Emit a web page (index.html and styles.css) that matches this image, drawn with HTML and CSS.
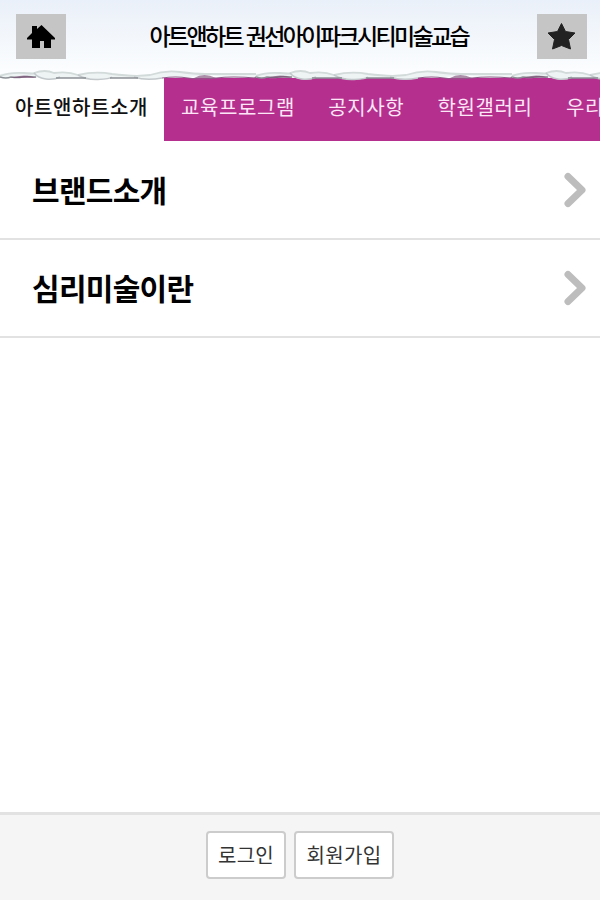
FILE: index.html
```html
<!DOCTYPE html>
<html lang="ko">
<head>
    <meta charset="UTF-8">
    <meta name="viewport" content="width=device-width, initial-scale=1.0">
    <title>아트앤하트</title>
    <link rel="stylesheet" href="styles.css">
</head>
<body>
    <header class="header">
        <a class="icon-btn" href="#" aria-label="홈">
            <svg width="30" height="26" viewBox="0 0 30 26"><path d="M1 14 L6 9 V2 H11 V5 L15.500 1 L29 14 V15.500 H25 V24 H18 V17 H14 V24 H6 V15.500 H1Z" fill="#000"/></svg>
        </a>
        <h1 class="title">아트앤하트 권선아이파크시티미술교습</h1>
        <a class="icon-btn" href="#" aria-label="즐겨찾기">
            <svg width="30" height="30" viewBox="0 0 30 30"><path d="M14.500 1.500 L18.500 9.500 L28 11 L21.500 17.500 L23.500 27 L14.500 23.500 L5.500 27 L7.500 17.500 L1 11 L10.500 9.500Z" fill="#222" stroke="#222" stroke-linejoin="round"/></svg>
        </a>
        <!-- torn paper edge, repeats every 256px -->
        <svg class="torn" width="600" height="14">
            <defs>
                <pattern id="edge" width="256" height="14" patternUnits="userSpaceOnUse">
                    <path d="M0 6 Q20 3 34 5 Q45 1 56 5 Q70 3 80 7 Q95 3 112 6 Q135 9 150 7 Q165 2 180 4 T205 6 T256 6 V9 Q235 10 222 9 Q212 6 200 8 Q180 10 165 9 Q150 14 138 10 L110 10 Q98 13 86 10 H60 Q50 13 40 10 Q27 6 10 10 L0 10Z" fill="#eef3f4"/>
                    <path d="M0 8 Q10 4 24 5 T34 5 Q45 1 54 5 Q68 3 78 7 Q95 3 112 6 Q135 9 150 7 Q165 2 180 4 T205 6 T256 6" fill="none" stroke="#d3dada" stroke-width="1.800"/>
                    <path d="M34 5 Q38 10 46 11 T60 9 M78 7 Q86 12 98 11.500 T112 9 M134 9 Q146 13 162 10" fill="none" stroke="#c3c9cb" stroke-width="1.500"/>
                    <path d="M0 9 Q6 11 11 9 Q18 10 22 9 T36 9 M56 10 H86 M110 10 H138" fill="none" stroke="#8d9196" stroke-width="1.500"/>
                    <path d="M162 10 Q176 8 188 10 T216 10 T256 10" fill="none" stroke="#8d5c86" stroke-width="1.200"/>
                    <path d="M194 10 Q204 4 216 10Z M254 10 L256 8 V10Z M10 10 Q25 5 37 10Z" fill="#77466f" opacity=".6"/>
                </pattern>
            </defs>
            <rect width="600" height="14" fill="url(#edge)"/>
        </svg>
    </header>

    <nav class="tabs">
        <a class="tab active" href="#">아트앤하트소개</a>
        <a class="tab" href="#">교육프로그램</a>
        <a class="tab" href="#">공지사항</a>
        <a class="tab" href="#">학원갤러리</a>
        <a class="tab" href="#">우리</a>
    </nav>

    <main class="list">
        <a class="row" href="#">
            <span>브랜드소개</span>
            <svg width="22" height="36" viewBox="0 0 22 36"><path d="M4 4.500 L18 18 L4 31.500" class="arrow"/></svg>
        </a>
        <a class="row" href="#">
            <span>심리미술이란</span>
            <svg width="22" height="36" viewBox="0 0 22 36"><path d="M4 4.500 L18 18 L4 31.500" class="arrow"/></svg>
        </a>
    </main>

    <footer class="footer">
        <a class="btn login" href="#">로그인</a>
        <a class="btn join" href="#">회원가입</a>
    </footer>
</body>
</html>
```
FILE: styles.css
```css
* {
    box-sizing: border-box;
}

body {
    margin: 0;
    height: 900px;
    display: flex;
    flex-direction: column;
    overflow: hidden;
    background-color: #fff;
    font-family: "Noto Sans CJK KR", sans-serif;
    color: #000;
}

a {
    color: inherit;
    text-decoration: none;
}

.header {
    position: relative;
    height: 78px;
    padding: 14px 13px 0 16px;
    display: flex;
    justify-content: space-between;
    align-items: flex-start;
    background: linear-gradient(#eaf0f9, #fbfdfe 90%);
}

.icon-btn {
    width: 50px;
    height: 45px;
    display: flex;
    justify-content: center;
    align-items: center;
    background-color: #c5c5c5;
}

.title {
    width: 322px;
    margin: 0 0 0 18px;
    overflow: hidden;
    white-space: nowrap;
    font-size: 23px;
    font-weight: 500;
    line-height: 43px;
    letter-spacing: -2.65px;
}

.torn {
    position: absolute;
    left: 0;
    top: 68px;
}

.tabs {
    height: 63px;
    display: flex;
    flex-shrink: 0;
    overflow: hidden;
    background-color: #b42f8e;
    color: #fde6f6;
    font-size: 20px;
    line-height: 57px;
    letter-spacing: 0.6px;
    white-space: nowrap;
}

.tab {
    flex-shrink: 0;
    padding: 0 16.3px 0 17px;
}

.tab.active {
    width: 164px;
    padding: 0 0 0 15px;
    background-color: #fff;
    color: #111;
    font-weight: 500;
}

.list {
    flex: 1;
}

.row {
    height: 98px;
    padding: 0 14px 0 32px;
    display: flex;
    justify-content: space-between;
    align-items: center;
    border-bottom: 2px solid #e2e2e2;
    font-size: 30px;
    font-weight: 700;
    letter-spacing: -0.7px;
}

.row:first-child {
    height: 99px;
}

.row span {
    margin-top: -2px;
}

.arrow {
    fill: none;
    stroke: #bdbdbd;
    stroke-width: 7;
    stroke-linecap: round;
    stroke-linejoin: round;
}

.footer {
    height: 88px;
    padding-top: 16px;
    display: flex;
    justify-content: center;
    gap: 8px;
    border-top: 3px solid #e2e2e2;
    background-color: #f5f5f5;
}

.btn {
    height: 48px;
    border: 2px solid #ccc;
    border-radius: 4px;
    background-color: #fff;
    color: #333;
    font-size: 20px;
    line-height: 44px;
    letter-spacing: 0.3px;
    text-align: center;
}

.login {
    width: 80px;
}

.join {
    width: 100px;
}
```
